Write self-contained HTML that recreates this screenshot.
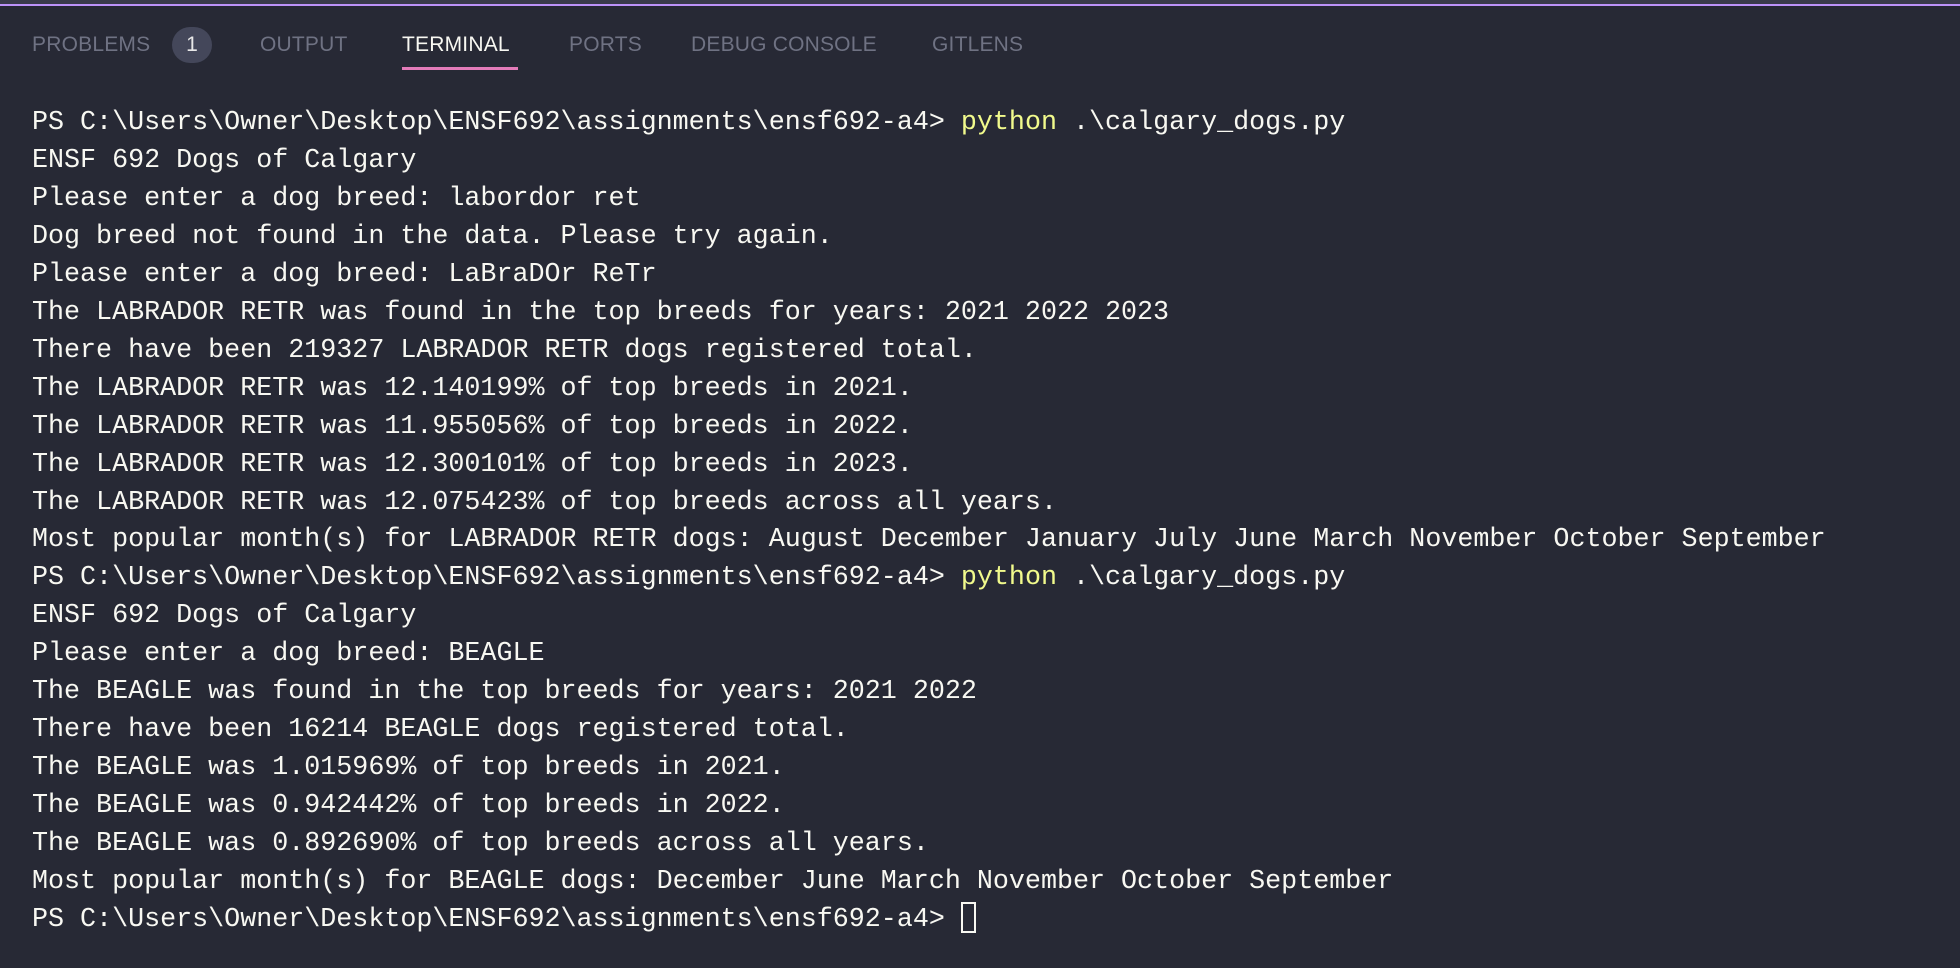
<!DOCTYPE html>
<html><head><meta charset="utf-8"><style>
html,body{margin:0;padding:0;width:1960px;height:968px;overflow:hidden;background:#272935;}
.top{position:absolute;left:0;top:0;width:1960px;height:4px;background:#3a3b4b;}
.topline{position:absolute;left:0;top:4px;width:1960px;height:2px;background:#bd93f9;}
.tabs{position:absolute;top:31px;font-family:"Liberation Sans",sans-serif;font-size:21px;color:#6f7283;letter-spacing:0.2px;}
.tab{position:absolute;top:0;white-space:nowrap;line-height:28px;}
.active{color:#f8f8f2;}
.ul{position:absolute;left:402px;top:67px;width:116px;height:3px;background:#e27bb9;}
.badge{position:absolute;left:172px;top:27px;width:40px;height:36px;border-radius:18px;background:#44475a;color:#e8e8e8;font-family:"Liberation Sans",sans-serif;font-size:21px;text-align:center;line-height:36px;}
pre{position:absolute;left:32px;top:105px;margin:0;font-family:"Liberation Mono",monospace;font-size:26.7px;line-height:37.95px;color:#f8f8f2;}
.y{color:#f1fa8c;}
.cur{display:inline-block;width:15px;height:31px;border:2px solid #f8f8f2;vertical-align:-7px;box-sizing:border-box;}
</style></head><body>
<div class="top"></div><div class="topline"></div>
<div class="tabs">
<div class="tab" style="left:32px">PROBLEMS</div>
<div class="tab" style="left:260px">OUTPUT</div>
<div class="tab active" style="left:402px">TERMINAL</div>
<div class="tab" style="left:569px">PORTS</div>
<div class="tab" style="left:691px">DEBUG CONSOLE</div>
<div class="tab" style="left:932px">GITLENS</div>
</div>
<div class="badge">1</div>
<div class="ul"></div>
<pre>PS C:\Users\Owner\Desktop\ENSF692\assignments\ensf692-a4&gt; <span class="y">python</span> .\calgary_dogs.py
ENSF 692 Dogs of Calgary
Please enter a dog breed: labordor ret
Dog breed not found in the data. Please try again.
Please enter a dog breed: LaBraDOr ReTr
The LABRADOR RETR was found in the top breeds for years: 2021 2022 2023
There have been 219327 LABRADOR RETR dogs registered total.
The LABRADOR RETR was 12.140199% of top breeds in 2021.
The LABRADOR RETR was 11.955056% of top breeds in 2022.
The LABRADOR RETR was 12.300101% of top breeds in 2023.
The LABRADOR RETR was 12.075423% of top breeds across all years.
Most popular month(s) for LABRADOR RETR dogs: August December January July June March November October September
PS C:\Users\Owner\Desktop\ENSF692\assignments\ensf692-a4&gt; <span class="y">python</span> .\calgary_dogs.py
ENSF 692 Dogs of Calgary
Please enter a dog breed: BEAGLE
The BEAGLE was found in the top breeds for years: 2021 2022
There have been 16214 BEAGLE dogs registered total.
The BEAGLE was 1.015969% of top breeds in 2021.
The BEAGLE was 0.942442% of top breeds in 2022.
The BEAGLE was 0.892690% of top breeds across all years.
Most popular month(s) for BEAGLE dogs: December June March November October September
PS C:\Users\Owner\Desktop\ENSF692\assignments\ensf692-a4&gt; <span class="cur"></span></pre>
</body></html>
